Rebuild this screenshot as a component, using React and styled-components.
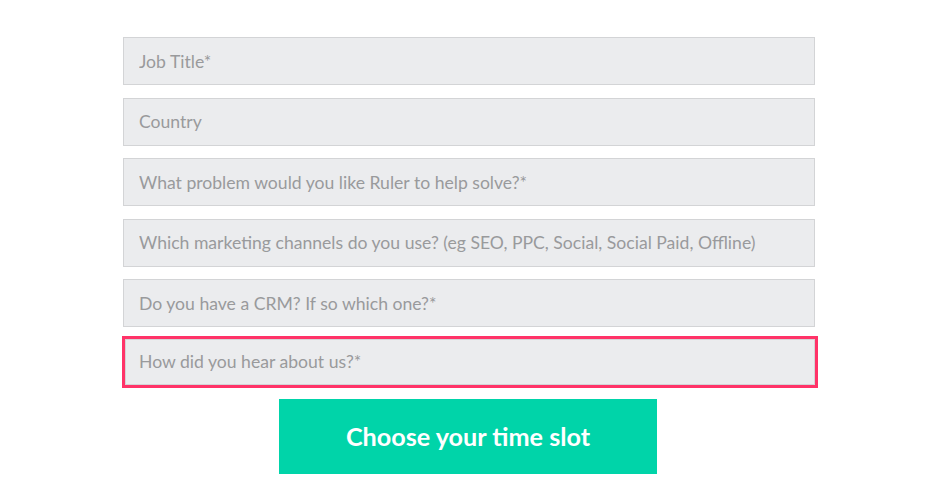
import React from "react";
import styled, { createGlobalStyle } from "styled-components";

const GlobalStyle = createGlobalStyle`
  body {
    margin: 0;
    background: #ffffff;
    font-family: "Lato", "Open Sans", sans-serif;
  }
`;

const fields = [
  { label: "Job Title*" },
  { label: "Country" },
  { label: "What problem would you like Ruler to help solve?*" },
  { label: "Which marketing channels do you use? (eg SEO, PPC, Social, Social Paid, Offline)" },
  { label: "Do you have a CRM? If so which one?*" },
  { label: "How did you hear about us?*", focused: true },
];

function App() {
  return (
    <>
      <GlobalStyle />
      <Form onSubmit={(e) => e.preventDefault()}>
        {fields.map((field) => (
          <Field key={field.label} placeholder={field.label} $focused={field.focused} />
        ))}
        <Submit type="submit">Choose your time slot</Submit>
      </Form>
    </>
  );
}

const Form = styled.form`
  width: 692px;
  margin-left: 123px;
  padding-top: 37px;
  display: flex;
  flex-direction: column;
  align-items: center;
  gap: 12.6px;
`;

const Field = styled.input`
  box-sizing: border-box;
  width: ${(p) => (p.$focused ? "690px" : "100%")};
  height: ${(p) => (p.$focused ? "46px" : "48px")};
  margin: ${(p) => (p.$focused ? "-1px 0 0 2px" : "0")};
  align-self: ${(p) => (p.$focused ? "flex-start" : "auto")};
  padding: 0 ${(p) => (p.$focused ? "13px" : "15px")};
  background: #ebecee;
  border: 1px solid #d3d4d6;
  border-radius: 0;
  font-family: "Lato", "Open Sans", sans-serif;
  font-size: 17.6px;
  color: #555;
  outline: none;
  box-shadow: ${(p) => (p.$focused ? "0 0 0 3px #ff3368" : "none")};

  &::placeholder {
    color: #999a9c;
  }
`;

const Submit = styled.button`
  margin-top: 1px;
  margin-right: 2px;
  width: 378px;
  height: 75px;
  background: #00d4a9;
  border: none;
  border-radius: 0;
  color: #ffffff;
  font-family: "Lato", "Open Sans", sans-serif;
  font-weight: 700;
  font-size: 25.2px;
  cursor: pointer;
`;

export default App;
